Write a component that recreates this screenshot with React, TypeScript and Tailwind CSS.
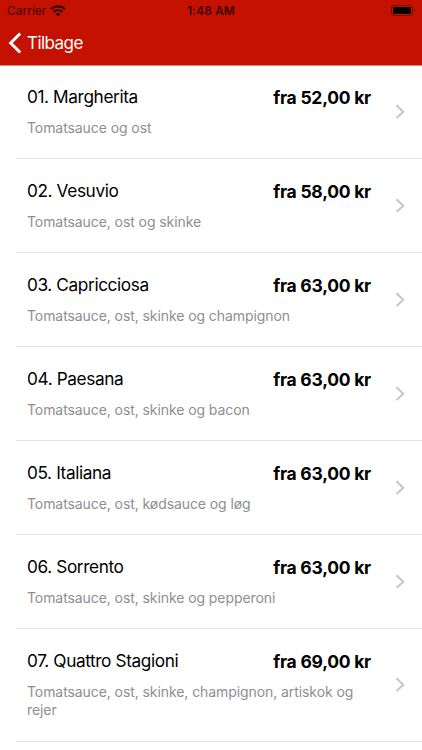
interface Pizza {
  name: string;
  description: string;
  price: string;
}

const PIZZAS: Pizza[] = [
  { name: '01. Margherita', description: 'Tomatsauce og ost', price: 'fra 52,00 kr' },
  { name: '02. Vesuvio', description: 'Tomatsauce, ost og skinke', price: 'fra 58,00 kr' },
  { name: '03. Capricciosa', description: 'Tomatsauce, ost, skinke og champignon', price: 'fra 63,00 kr' },
  { name: '04. Paesana', description: 'Tomatsauce, ost, skinke og bacon', price: 'fra 63,00 kr' },
  { name: '05. Italiana', description: 'Tomatsauce, ost, kødsauce og løg', price: 'fra 63,00 kr' },
  { name: '06. Sorrento', description: 'Tomatsauce, ost, skinke og pepperoni', price: 'fra 63,00 kr' },
  { name: '07. Quattro Stagioni', description: 'Tomatsauce, ost, skinke, champignon, artiskok og rejer', price: 'fra 69,00 kr' },
];

function WifiIcon() {
  return (
    <svg width="16" height="12" viewBox="0 0 16 12" fill="none" stroke="#2e0300">
      <path d="M1 4.1C4.9 0.4 11.1 0.4 15 4.1" strokeWidth="2.3" />
      <path d="M3.6 6.9C6.1 4.6 9.9 4.6 12.4 6.9" strokeWidth="2.1" />
      <path d="M8 11.3L5.4 8.9C6.9 7.7 9.1 7.7 10.6 8.9Z" fill="#2e0300" stroke="none" />
    </svg>
  );
}

function BatteryIcon() {
  return (
    <svg width="25" height="12" viewBox="0 0 25 12" fill="none">
      <rect x="0.5" y="0.5" width="21" height="10" rx="2.5" stroke="#7f0b00" />
      <rect x="2" y="2" width="18" height="7" rx="1" fill="#000" />
      <path d="M23 3.8C24.4 4.4 24.4 6.6 23 7.2Z" fill="#7f0b00" />
    </svg>
  );
}

function StatusBar() {
  return (
    <div className="grid h-[22px] grid-cols-3 items-center pl-[7px] pr-[6px] text-[#3a0400]">
      <div className="flex items-center gap-[4px]">
        <span className="text-[12px]">Carrier</span>
        <WifiIcon />
      </div>
      <span className="pr-px text-center text-[12px] font-semibold tracking-[0.1px]">1:48 AM</span>
      <div className="flex justify-end">
        <BatteryIcon />
      </div>
    </div>
  );
}

function PizzaRow({ pizza }: { pizza: Pizza }) {
  return (
    <li className="ml-4 flex items-center border-b border-[#e4e4e5] pl-[11px] pr-[17px] last:pb-px">
      <div className="min-w-0 flex-1 pb-[21px] pt-[20px]">
        <div className="flex h-[24px] items-center justify-between pr-[8px] text-black">
          <h2 className="text-[17.25px] tracking-[-0.4px]">{pizza.name}</h2>
          <span className="pt-[2px] text-[17.5px] font-bold tracking-[-0.25px]">{pizza.price}</span>
        </div>
        <p className="mt-[10px] text-[14px] leading-[18px] tracking-[-0.08px] text-[#8e8e93]">{pizza.description}</p>
      </div>
      <svg className="ml-[16px] shrink-0" width="10" height="16" viewBox="0 0 10 16" fill="none">
        <path d="M1.5 1.3L8.2 7.7L1.5 14.1" stroke="#c5c5c9" strokeWidth="2" />
      </svg>
    </li>
  );
}

export default function App() {
  return (
    <div className="h-[750px] w-[422px] overflow-hidden bg-white font-['Inter',sans-serif]">
      <header className="h-[66px] border-b border-[#e77f79] bg-[#c51200]">
        <StatusBar />
        <button className="flex h-[42px] items-center gap-[5px] pl-[8px] text-white">
          <svg className="-mt-px" width="14" height="22" viewBox="0 0 14 22" fill="none">
            <path d="M12.2 1.5L2.7 11L12.2 20.5" stroke="currentColor" strokeWidth="3" />
          </svg>
          <span className="pt-[2px] text-[17px] tracking-[-0.55px]">Tilbage</span>
        </button>
      </header>
      <ul className="-mt-px">
        {PIZZAS.map((pizza) => (
          <PizzaRow key={pizza.name} pizza={pizza} />
        ))}
      </ul>
    </div>
  );
}
